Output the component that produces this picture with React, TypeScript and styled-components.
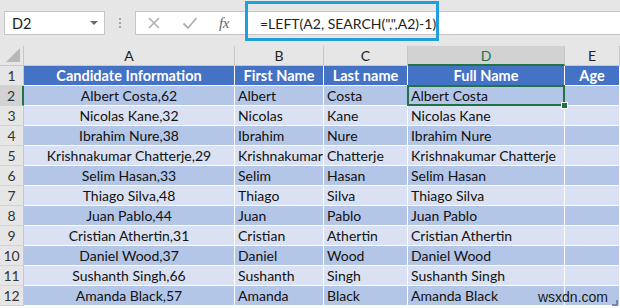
import React from 'react';
import styled, { createGlobalStyle } from 'styled-components';

const GlobalStyle = createGlobalStyle`
  html, body {
    margin: 0;
    padding: 0;
    background: #ffffff;
  }
  body {
    font-family: Lato, "Noto Sans", "Liberation Sans", sans-serif;
    width: 620px;
    height: 308px;
    overflow: hidden;
  }
`;

const COLS = '24px 211px 89px 84px 157px 1fr';

const Window = styled.div`
  position: relative;
  width: 620px;
  height: 308px;
  overflow: hidden;
  background: #ffffff;
`;

const Toolbar = styled.div`
  display: flex;
  align-items: center;
  height: 46px;
  padding-left: 4px;
  background: #e6e6e6;
  box-sizing: border-box;
`;

const NameBox = styled.div`
  display: flex;
  align-items: center;
  justify-content: space-between;
  width: 101px;
  height: 24px;
  box-sizing: border-box;
  padding: 0 6px 0 7px;
  background: #ffffff;
  border: 1px solid #c6c6c6;
  font-size: 14.5px;
  color: #222;
`;

const DropArrow = styled.span`
  width: 0;
  height: 0;
  border-left: 4px solid transparent;
  border-right: 4px solid transparent;
  border-top: 4px solid #6b6b6b;
`;

const Grip = styled.div`
  display: flex;
  flex-direction: column;
  gap: 2px;
  margin: 0 14px;
  span {
    width: 2px;
    height: 2px;
    background: #a6a6a6;
  }
`;

const FormulaBar = styled.div`
  position: relative;
  display: flex;
  align-items: center;
  flex: 1;
  height: 24px;
  background: #ffffff;
  border: 1px solid #c6c6c6;
  border-right: none;
  box-sizing: border-box;
`;

const BarIcons = styled.div`
  display: flex;
  align-items: center;
  width: 108px;
  padding-left: 11px;
  gap: 21px;
  box-sizing: border-box;
`;

const Fx = styled.span`
  font-family: "Liberation Serif", serif;
  font-style: italic;
  font-size: 15px;
  color: #666;
  letter-spacing: -0.5px;
`;

const FormulaText = styled.div`
  padding-left: 16px;
  font-size: 14px;
  color: #222;
  white-space: nowrap;
`;

const Highlight = styled.div`
  position: absolute;
  left: 109px;
  top: -11px;
  width: 194px;
  height: 40px;
  box-sizing: border-box;
  border: 3px solid #1fa0dc;
`;

const Sheet = styled.div`
  display: grid;
  grid-template-columns: ${COLS};
  grid-auto-rows: 20px;
  font-size: 14px;
`;

const Corner = styled.div`
  position: relative;
  background: #e6e6e6;
  border-right: 1px solid #c8c8c8;
  border-bottom: 1px solid #c8c8c8;
  &::after {
    content: '';
    position: absolute;
    right: 3px;
    bottom: 3px;
    width: 0;
    height: 0;
    border-left: 14px solid transparent;
    border-bottom: 14px solid #b8b8b8;
  }
`;

const ColHead = styled.div<{ $active?: boolean }>`
  display: flex;
  align-items: center;
  justify-content: center;
  background: ${(p) => (p.$active ? '#d2d2d2' : '#e6e6e6')};
  color: ${(p) => (p.$active ? '#217346' : '#222')};
  border-right: 1px solid #c8c8c8;
  border-bottom: ${(p) => (p.$active ? '2px solid #217346' : '1px solid #c8c8c8')};
  box-sizing: border-box;
  font-size: 14px;
`;

const RowHead = styled.div<{ $active?: boolean }>`
  display: flex;
  align-items: center;
  justify-content: center;
  background: ${(p) => (p.$active ? '#d2d2d2' : '#e6e6e6')};
  color: #333;
  border-right: ${(p) => (p.$active ? '2px solid #217346' : '1px solid #c8c8c8')};
  border-bottom: 1px solid #d4d4d4;
  box-sizing: border-box;
  font-size: 14px;
`;

const Cell = styled.div<{ $tone: 'head' | 'dark' | 'light'; $center?: boolean; $selected?: boolean }>`
  position: relative;
  display: flex;
  align-items: center;
  justify-content: ${(p) => (p.$center ? 'center' : 'flex-start')};
  padding-left: ${(p) => (p.$center ? '0' : '3px')};
  background: ${(p) => (p.$tone === 'head' ? '#4472c4' : p.$tone === 'dark' ? '#b4c6e7' : '#d9e1f2')};
  color: ${(p) => (p.$tone === 'head' ? '#ffffff' : '#111')};
  font-weight: ${(p) => (p.$tone === 'head' ? 700 : 400)};
  font-size: ${(p) => (p.$tone === 'head' ? '14.5px' : '14px')};
  border-right: 1px solid #ffffff;
  border-bottom: 1px solid #ffffff;
  box-sizing: border-box;
  white-space: nowrap;
  overflow: hidden;
  ${(p) =>
    p.$selected &&
    `
    overflow: visible;
    &::before {
      content: '';
      position: absolute;
      left: -1px;
      top: -1px;
      right: -1px;
      bottom: -1px;
      border: 2px solid #217346;
      pointer-events: none;
    }
    &::after {
      content: '';
      position: absolute;
      right: -4px;
      bottom: -4px;
      width: 5px;
      height: 5px;
      background: #217346;
      border: 1px solid #ffffff;
      z-index: 2;
    }
  `}
`;

const Watermark = styled.div`
  position: absolute;
  right: 12px;
  bottom: 3px;
  font-family: "Liberation Sans", Arial, sans-serif;
  font-size: 14px;
  color: #1a1a1a;
`;

const Resize = styled.div`
  position: absolute;
  right: 2px;
  bottom: 2px;
  width: 4px;
  height: 4px;
  border-right: 2px solid #7a8aa6;
  border-bottom: 2px solid #7a8aa6;
`;

const people: [string, string, string, number][] = [
  ['Albert', 'Costa', 'Albert Costa', 62],
  ['Nicolas', 'Kane', 'Nicolas Kane', 32],
  ['Ibrahim', 'Nure', 'Ibrahim Nure', 38],
  ['Krishnakumar', 'Chatterje', 'Krishnakumar Chatterje', 29],
  ['Selim', 'Hasan', 'Selim Hasan', 33],
  ['Thiago', 'Silva', 'Thiago Silva', 48],
  ['Juan', 'Pablo', 'Juan Pablo', 44],
  ['Cristian', 'Athertin', 'Cristian Athertin', 31],
  ['Daniel', 'Wood', 'Daniel Wood', 37],
  ['Sushanth', 'Singh', 'Sushanth Singh', 66],
  ['Amanda', 'Black', 'Amanda Black', 57],
];

const CrossIcon = () => (
  <svg width="14" height="14" viewBox="0 0 14 14">
    <path d="M2 2 L12 12 M12 2 L2 12" stroke="#b0b0b0" strokeWidth="1.6" fill="none" />
  </svg>
);

const CheckIcon = () => (
  <svg width="16" height="14" viewBox="0 0 16 14">
    <path d="M1.5 7.5 L6 12 L14.5 2" stroke="#b0b0b0" strokeWidth="1.8" fill="none" />
  </svg>
);

export default function App() {
  return (
    <Window>
      <GlobalStyle />
      <Toolbar>
        <NameBox>
          D2
          <DropArrow />
        </NameBox>
        <Grip>
          <span />
          <span />
          <span />
        </Grip>
        <FormulaBar>
          <BarIcons>
            <CrossIcon />
            <CheckIcon />
            <Fx>fx</Fx>
          </BarIcons>
          <FormulaText>=LEFT(A2, SEARCH(",",A2)-1)</FormulaText>
          <Highlight />
        </FormulaBar>
      </Toolbar>
      <Sheet>
        <Corner />
        {['A', 'B', 'C', 'D', 'E'].map((c) => (
          <ColHead key={c} $active={c === 'D'}>
            {c}
          </ColHead>
        ))}
        <RowHead>1</RowHead>
        <Cell $tone="head" $center>Candidate Information</Cell>
        <Cell $tone="head" $center>First Name</Cell>
        <Cell $tone="head" $center>Last name</Cell>
        <Cell $tone="head" $center>Full Name</Cell>
        <Cell $tone="head" $center>Age</Cell>
        {people.map(([first, last, full, age], i) => {
          const tone = i % 2 === 0 ? 'dark' : 'light';
          return (
            <React.Fragment key={full}>
              <RowHead $active={i === 0}>{i + 2}</RowHead>
              <Cell $tone={tone} $center>{`${full},${age}`}</Cell>
              <Cell $tone={tone}>{first}</Cell>
              <Cell $tone={tone}>{last}</Cell>
              <Cell $tone={tone} $selected={i === 0}>{full}</Cell>
              <Cell $tone={tone} />
            </React.Fragment>
          );
        })}
      </Sheet>
      <Watermark>wsxdn.com</Watermark>
      <Resize />
    </Window>
  );
}
